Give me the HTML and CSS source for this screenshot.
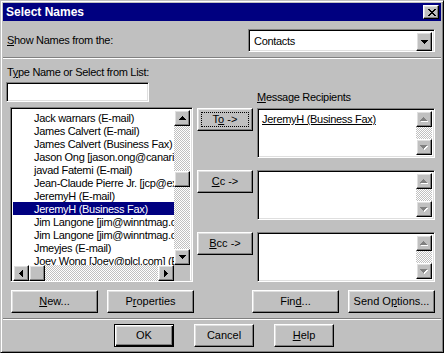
FILE: index.html
```html
<!DOCTYPE html>
<html>
<head>
<meta charset="utf-8">
<link rel="stylesheet" href="styles.css">
</head>
<body>
<div class="window">
  <div class="titlebar">
    <span class="title">Select Names</span>
    <div class="close raised">
      <svg width="8" height="7" viewBox="0 0 8 7" shape-rendering="crispEdges"><path d="M0 0h2v1h-2zM6 0h2v1h-2zM1 1h2v1h-2zM5 1h2v1h-2zM2 2h4v1h-4zM3 3h2v1h-2zM2 4h4v1h-4zM1 5h2v1h-2zM5 5h2v1h-2zM0 6h2v1h-2zM6 6h2v1h-2z" fill="#000"/></svg>
    </div>
  </div>
  <div class="content">
    <div class="toprow">
      <span class="toplabel first">Show Names from the:</span>
      <div class="combo sunken">
        <span class="combo-text">Contacts</span>
        <div class="sbtn raised"><svg width="7" height="4" viewBox="0 0 7 4" shape-rendering="crispEdges"><path d="M0 0h7v1h-1v1h-1v1h-1v1h-1v-1h-1v-1h-1v-1h-1z"/></svg></div>
      </div>
    </div>
    <div class="sep"></div>
    <div class="middle">
      <div class="left">
        <div class="lbl">T<u>y</u>pe Name or Select from List:</div>
        <div class="textbox sunken"></div>
        <div class="listbox sunken">
          <div class="list-main">
            <div class="items">
              <div class="item">Jack warnars (E-mail)</div>
              <div class="item">James Calvert (E-mail)</div>
              <div class="item">James Calvert (Business Fax)</div>
              <div class="item">Jason Ong [jason.ong@canarie.ca]</div>
              <div class="item">javad Fatemi (E-mail)</div>
              <div class="item">Jean-Claude Pierre Jr. [jcp@exchange.com]</div>
              <div class="item">JeremyH (E-mail)</div>
              <div class="item sel">JeremyH (Business Fax)</div>
              <div class="item">Jim Langone [jim@winntmag.com]</div>
              <div class="item">Jim Langone [jim@winntmag.com]</div>
              <div class="item">Jmeyjes (E-mail)</div>
              <div class="item">Joey Wong [Joey@plcl.com] (E-mail)</div>
            </div>
            <div class="vscroll">
              <div class="sbtn raised"><svg width="7" height="4" viewBox="0 0 7 4" shape-rendering="crispEdges"><path d="M3 0h1v1h1v1h1v1h1v1H0V3h1V2h1V1h1z"/></svg></div>
              <div class="vtrack"><div class="thumb raised"></div></div>
              <div class="sbtn raised"><svg width="7" height="4" viewBox="0 0 7 4" shape-rendering="crispEdges"><path d="M0 0h7v1h-1v1h-1v1h-1v1h-1v-1h-1v-1h-1v-1h-1z"/></svg></div>
            </div>
          </div>
          <div class="hrow">
            <div class="hscroll">
              <div class="sbtn raised"><svg width="4" height="7" viewBox="0 0 4 7" shape-rendering="crispEdges"><path d="M0 3h1v-1h1v-1h1v-1h1v7h-1v-1h-1v-1h-1v-1h-1z"/></svg></div>
              <div class="thumb raised"></div>
              <div class="htrack"></div>
              <div class="sbtn raised"><svg width="4" height="7" viewBox="0 0 4 7" shape-rendering="crispEdges"><path d="M0 0h1v1h1v1h1v1h1v1h-1v1h-1v1h-1v1h-1z"/></svg></div>
            </div>
            <div class="corner"></div>
          </div>
        </div>
      </div>
      <div class="right">
        <div class="rlbl"><span class="first">Message Recipients</span></div>
        <div class="rrow">
          <div class="btn raised"><span class="cap focus"><span class="t">T<u>o</u> -&gt;</span></span></div>
          <div class="rbox sunken">
            <div class="rtext"><u>JeremyH (Business Fax)</u></div>
            <div class="vscroll">
              <div class="sbtn raised"><svg width="8" height="5" viewBox="0 0 8 5" shape-rendering="crispEdges"><path transform="translate(1 1)" fill="#fff" d="M3 0h1v1h1v1h1v1h1v1H0V3h1V2h1V1h1z"/><path fill="#808080" d="M3 0h1v1h1v1h1v1h1v1H0V3h1V2h1V1h1z"/></svg></div>
              <div class="vtrack"></div>
              <div class="sbtn raised"><svg width="8" height="5" viewBox="0 0 8 5" shape-rendering="crispEdges"><path transform="translate(1 1)" fill="#fff" d="M0 0h7v1h-1v1h-1v1h-1v1h-1v-1h-1v-1h-1v-1h-1z"/><path fill="#808080" d="M0 0h7v1h-1v1h-1v1h-1v1h-1v-1h-1v-1h-1v-1h-1z"/></svg></div>
            </div>
          </div>
        </div>
        <div class="rrow">
          <div class="btn raised"><span class="cap"><span class="t first">Cc -&gt;</span></span></div>
          <div class="rbox sunken">
            <div class="rtext"></div>
            <div class="vscroll">
              <div class="sbtn raised"><svg width="8" height="5" viewBox="0 0 8 5" shape-rendering="crispEdges"><path transform="translate(1 1)" fill="#fff" d="M3 0h1v1h1v1h1v1h1v1H0V3h1V2h1V1h1z"/><path fill="#808080" d="M3 0h1v1h1v1h1v1h1v1H0V3h1V2h1V1h1z"/></svg></div>
              <div class="vtrack"></div>
              <div class="sbtn raised"><svg width="8" height="5" viewBox="0 0 8 5" shape-rendering="crispEdges"><path transform="translate(1 1)" fill="#fff" d="M0 0h7v1h-1v1h-1v1h-1v1h-1v-1h-1v-1h-1v-1h-1z"/><path fill="#808080" d="M0 0h7v1h-1v1h-1v1h-1v1h-1v-1h-1v-1h-1v-1h-1z"/></svg></div>
            </div>
          </div>
        </div>
        <div class="rrow">
          <div class="btn raised"><span class="cap"><span class="t first">Bcc -&gt;</span></span></div>
          <div class="rbox sunken">
            <div class="rtext"></div>
            <div class="vscroll">
              <div class="sbtn raised"><svg width="8" height="5" viewBox="0 0 8 5" shape-rendering="crispEdges"><path transform="translate(1 1)" fill="#fff" d="M3 0h1v1h1v1h1v1h1v1H0V3h1V2h1V1h1z"/><path fill="#808080" d="M3 0h1v1h1v1h1v1h1v1H0V3h1V2h1V1h1z"/></svg></div>
              <div class="vtrack"></div>
              <div class="sbtn raised"><svg width="8" height="5" viewBox="0 0 8 5" shape-rendering="crispEdges"><path transform="translate(1 1)" fill="#fff" d="M0 0h7v1h-1v1h-1v1h-1v1h-1v-1h-1v-1h-1v-1h-1z"/><path fill="#808080" d="M0 0h7v1h-1v1h-1v1h-1v1h-1v-1h-1v-1h-1v-1h-1z"/></svg></div>
            </div>
          </div>
        </div>
      </div>
    </div>
    <div class="actions">
      <div class="btn wide raised"><span class="cap"><span class="t first">New...</span></span></div>
      <div class="btn wide raised gap9"><span class="cap"><span class="t">P<u>r</u>operties</span></span></div>
      <div class="btn wide raised gapbig"><span class="cap"><span class="t">Fin<u>d</u>...</span></span></div>
      <div class="btn wide raised gap9"><span class="cap"><span class="t">Send O<u>p</u>tions...</span></span></div>
    </div>
    <div class="sep sep-bottom"></div>
    <div class="footer">
      <div class="btn dlg default"><span class="cap"><span class="t">OK</span></span></div>
      <div class="btn dlg raised"><span class="cap"><span class="t">Cancel</span></span></div>
      <div class="btn dlg raised"><span class="cap"><span class="t first">Help</span></span></div>
    </div>
  </div>
</div>
</body>
</html>
```
FILE: styles.css
```css
* { box-sizing: border-box; }
html, body { margin: 0; padding: 0; }
body {
  font-family: "Liberation Sans", Arial, sans-serif;
  font-size: 11px;
  letter-spacing: -0.3px;
  color: #000;
  background: #c0c0c0;
}
u { text-decoration: underline; text-underline-offset: 1px; }
.first { display: inline-block; }
.first::first-letter { text-decoration: underline; text-underline-offset: 1px; }

.raised {
  background: #c0c0c0;
  border: 1px solid;
  border-color: #fff #000 #000 #fff;
  box-shadow: inset -1px -1px 0 #808080, inset 1px 1px 0 #dfdfdf;
}
.sunken {
  background: #fff;
  border: 1px solid;
  border-color: #808080 #fff #fff #808080;
  box-shadow: inset 1px 1px 0 #000, inset -1px -1px 0 #dfdfdf;
}

.window {
  width: 444px;
  height: 353px;
  background: #c0c0c0;
  border: 1px solid;
  border-color: #c0c0c0 #000 #000 #c0c0c0;
  box-shadow: inset 1px 1px 0 #fff, inset -1px -1px 0 #808080;
  padding: 2px;
  display: flex;
  flex-direction: column;
}

.titlebar {
  height: 18px;
  background: #000080;
  display: flex;
  align-items: center;
  justify-content: space-between;
  padding: 0 2px 0 3px;
}
.title {
  color: #fff;
  font-weight: bold;
  font-size: 12px;
  letter-spacing: 0;
  line-height: 18px;
}
.close {
  width: 16px;
  height: 14px;
  display: flex;
  align-items: center;
  justify-content: center;
  padding-left: 1px;
}

.content { display: flex; flex-direction: column; }

.toprow {
  height: 36px;
  display: flex;
  align-items: flex-start;
  justify-content: space-between;
  padding: 8px 6px 0 4px;
}
.toplabel { line-height: 23px; }
.combo {
  width: 187px;
  height: 23px;
  display: flex;
  padding: 2px;
}
.combo-text { flex: 1; padding-left: 3px; line-height: 19px; }
.combo .sbtn { height: 19px; }

.sep {
  height: 2px;
  border-top: 1px solid #808080;
  border-bottom: 1px solid #fff;
}

.middle { display: flex; align-items: flex-start; height: 223px; }

.left {
  width: 194px;
  padding-top: 7px;
  display: flex;
  flex-direction: column;
}
.lbl { margin-left: 4px; height: 13px; line-height: 13px; white-space: nowrap; }
.textbox { margin: 3px 0 0 3px; width: 143px; height: 20px; }
.listbox {
  margin: 5px 0 0 7px;
  width: 183px;
  height: 175px;
  padding: 2px;
  display: flex;
  flex-direction: column;
}
.list-main { display: flex; height: 155px; }
.items { flex: 1; overflow: hidden; padding-top: 1px; white-space: nowrap; }
.item { height: 13px; line-height: 15px; padding-left: 21px; }
.item.sel { background: #000080; color: #fff; }

.vscroll {
  width: 16px;
  display: flex;
  flex-direction: column;
  background: repeating-conic-gradient(#fff 0 25%, #c0c0c0 0 50%) 0 0 / 2px 2px;
}
.sbtn {
  width: 16px;
  height: 16px;
  flex: none;
  display: flex;
  align-items: center;
  justify-content: center;
}
.sbtn svg { display: block; }
.vtrack { flex: 1; }
.vtrack .thumb { margin-top: 45px; }
.thumb { width: 16px; height: 16px; flex: none; }

.hrow { display: flex; height: 16px; }
.hscroll {
  flex: 1;
  display: flex;
  background: repeating-conic-gradient(#fff 0 25%, #c0c0c0 0 50%) 0 0 / 2px 2px;
}
.htrack { flex: 1; }
.corner { width: 16px; background: #c0c0c0; }

.right { padding-top: 32px; display: flex; flex-direction: column; }
.rlbl { margin-left: 60px; height: 13px; line-height: 13px; margin-bottom: 4px; white-space: nowrap; }
.rrow { display: flex; gap: 4px; height: 50px; margin-bottom: 12px; }
.rrow:last-child { margin-bottom: 0; }
.rbox { width: 178px; height: 50px; padding: 2px; display: flex; }
.rtext { flex: 1; padding: 2px 0 0 2px; line-height: 13px; white-space: nowrap; }

.btn {
  width: 56px;
  height: 23px;
  flex: none;
  display: flex;
  padding: 3px;
}
.cap {
  flex: 1;
  display: flex;
  align-items: center;
  justify-content: center;
  border: 1px solid transparent;
  white-space: pre;
  letter-spacing: 0;
}
.cap.focus { border: 1px dotted #000; }
.t { line-height: 13px; }

.actions {
  display: flex;
  padding: 8px 0 0 8px;
  height: 31px;
}
.btn.wide { width: 87px; }
.gap9 { margin-left: 9px; }
.gapbig { margin-left: 58px; }

.sep-bottom { margin-top: 5px; }

.footer {
  display: flex;
  gap: 20px;
  padding: 4px 0 0 111px;
}
.btn.dlg { width: 60px; }
.default {
  background: #c0c0c0;
  border: 1px solid #000;
  box-shadow: inset 1px 1px 0 #fff, inset -1px -1px 0 #000, inset -2px -2px 0 #808080, inset 2px 2px 0 #dfdfdf;
}
```
